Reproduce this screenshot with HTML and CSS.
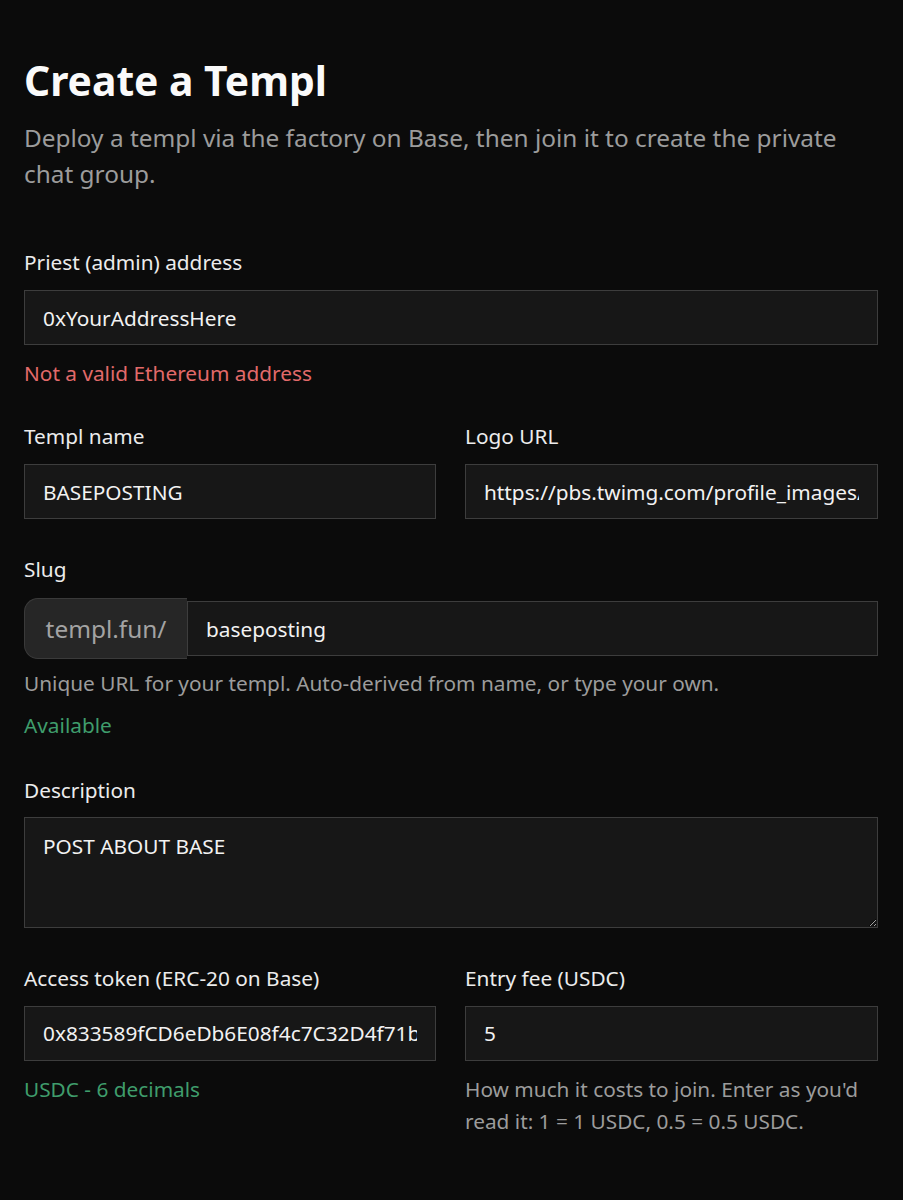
FILE: index.html
```html
<!DOCTYPE html>
<html lang="en">
<head>
<meta charset="utf-8">
<title>Create a Templ</title>
<link rel="stylesheet" href="styles.css">
</head>
<body>
<main class="page">
  <h1 class="title">Create a Templ</h1>
  <p class="lead">Deploy a templ via the factory on Base, then join it to create the private chat group.</p>

  <form class="form">
    <div class="field field-priest">
      <label class="label" for="priest">Priest (admin) address</label>
      <input class="input" id="priest" type="text" value="0xYourAddressHere">
      <p class="msg msg-error">Not a valid Ethereum address</p>
    </div>

    <div class="row">
      <div class="field">
        <label class="label" for="name">Templ name</label>
        <input class="input" id="name" type="text" value="BASEPOSTING">
      </div>
      <div class="field">
        <label class="label" for="logo">Logo URL</label>
        <input class="input" id="logo" type="text" value="https://pbs.twimg.com/profile_images/1879556312822120448/base_400x400.jpg">
      </div>
    </div>

    <div class="field">
      <label class="label" for="slug">Slug</label>
      <div class="slug-group">
        <span class="slug-prefix">templ.fun/</span>
        <input class="input slug-input" id="slug" type="text" value="baseposting">
      </div>
      <p class="msg msg-hint msg-slug">Unique URL for your templ. Auto-derived from name, or type your own.</p>
      <p class="msg msg-ok msg-available">Available</p>
    </div>

    <div class="field">
      <label class="label" for="desc">Description</label>
      <textarea class="input textarea" id="desc">POST ABOUT BASE</textarea>
    </div>

    <div class="row">
      <div class="field">
        <label class="label" for="token">Access token (ERC-20 on Base)</label>
        <input class="input" id="token" type="text" value="0x833589fCD6eDb6E08f4c7C32D4f71b54bdA02913">
        <p class="msg msg-ok msg-below">USDC - 6 decimals</p>
      </div>
      <div class="field">
        <label class="label" for="fee">Entry fee (USDC)</label>
        <input class="input" id="fee" type="text" value="5">
        <p class="msg msg-hint msg-below">How much it costs to join. Enter as you'd read it: 1 = 1 USDC, 0.5 = 0.5 USDC.</p>
      </div>
    </div>
  </form>
</main>
</body>
</html>
```

FILE: styles.css
```css
html {
  color-scheme: dark;
}

body {
  margin: 0;
  background: #0b0b0b;
  color: #ececec;
  font-family: "Noto Sans", "Open Sans", sans-serif;
  min-height: 1200px;
}

.page {
  padding: 56px 25px 40px 24px;
}

.title {
  margin: 0;
  font-size: 40.8px;
  line-height: 48px;
  font-weight: 700;
  color: #fafafa;
}

.lead {
  margin: 16px 0 0;
  font-size: 24.4px;
  line-height: 36px;
  color: #9c9c9c;
}

.form {
  margin-top: 56px;
  display: flex;
  flex-direction: column;
  gap: 36px;
}

.field {
  display: flex;
  flex-direction: column;
  min-width: 0;
}

.row {
  display: grid;
  grid-template-columns: 412px 1fr;
  column-gap: 29px;
  align-items: start;
}

.label {
  font-size: 20.8px;
  line-height: 28px;
  color: #ececec;
  margin-bottom: 14px;
}

.input {
  box-sizing: border-box;
  width: 100%;
  height: 55px;
  margin: 0;
  padding: 0 18px;
  background: #171717;
  border: 1.5px solid #3d3d3d;
  border-radius: 0;
  color: #f2f2f2;
  font-family: inherit;
  font-size: 20.8px;
  outline: none;
}

.textarea {
  height: 111px;
  padding: 14px 18px;
  line-height: 28px;
  resize: vertical;
  margin-top: -1.5px;
}

.slug-group {
  display: flex;
  align-items: center;
  margin-top: 1px;
}

.slug-prefix {
  box-sizing: border-box;
  flex: none;
  width: 163px;
  height: 61px;
  display: flex;
  align-items: center;
  justify-content: center;
  background: #262626;
  border: 1.5px solid #3a3a3a;
  border-right: none;
  border-radius: 14px 0 0 14px;
  color: #a3a3a3;
  font-size: 24.4px;
}

.slug-input {
  flex: 1;
  min-width: 0;
}

.msg {
  margin: 0;
  font-size: 20.8px;
  line-height: 32px;
}

.msg-error {
  color: #e26a6a;
  margin-top: 12px;
  margin-bottom: -3px;
}

.msg-hint {
  color: #9c9c9c;
}

.msg-ok {
  color: #3f9d6c;
}

.msg-slug {
  margin-top: 8px;
}

.msg-available {
  margin-top: 10px;
  margin-bottom: -1px;
}

.msg-below {
  margin-top: 12px;
}
```
